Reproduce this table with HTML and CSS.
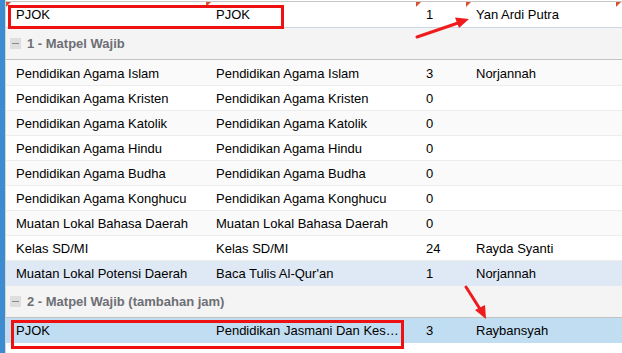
FILE: index.html
```html
<!DOCTYPE html>
<html>
<head>
<meta charset="utf-8">
<link rel="stylesheet" href="styles.css">
</head>
<body>
<div class="page">
  <div class="sidebar"></div>
  <div class="grid">
    <div class="row top">
      <div class="cell dirty">PJOK</div>
      <div class="cell dirty">PJOK</div>
      <div class="cell dirty">1</div>
      <div class="cell dirty">Yan Ardi Putra</div>
      <div class="cell dirty"></div>
    </div>
    <div class="group"><span class="toggle"></span>1 - Matpel Wajib</div>
    <div class="row alt first">
      <div class="cell">Pendidikan Agama Islam</div>
      <div class="cell">Pendidikan Agama Islam</div>
      <div class="cell">3</div>
      <div class="cell">Norjannah</div>
      <div class="cell"></div>
    </div>
    <div class="row">
      <div class="cell">Pendidikan Agama Kristen</div>
      <div class="cell">Pendidikan Agama Kristen</div>
      <div class="cell">0</div>
      <div class="cell"></div>
      <div class="cell"></div>
    </div>
    <div class="row alt">
      <div class="cell">Pendidikan Agama Katolik</div>
      <div class="cell">Pendidikan Agama Katolik</div>
      <div class="cell">0</div>
      <div class="cell"></div>
      <div class="cell"></div>
    </div>
    <div class="row">
      <div class="cell">Pendidikan Agama Hindu</div>
      <div class="cell">Pendidikan Agama Hindu</div>
      <div class="cell">0</div>
      <div class="cell"></div>
      <div class="cell"></div>
    </div>
    <div class="row alt">
      <div class="cell">Pendidikan Agama Budha</div>
      <div class="cell">Pendidikan Agama Budha</div>
      <div class="cell">0</div>
      <div class="cell"></div>
      <div class="cell"></div>
    </div>
    <div class="row">
      <div class="cell">Pendidikan Agama Konghucu</div>
      <div class="cell">Pendidikan Agama Konghucu</div>
      <div class="cell">0</div>
      <div class="cell"></div>
      <div class="cell"></div>
    </div>
    <div class="row alt">
      <div class="cell">Muatan Lokal Bahasa Daerah</div>
      <div class="cell">Muatan Lokal Bahasa Daerah</div>
      <div class="cell">0</div>
      <div class="cell"></div>
      <div class="cell"></div>
    </div>
    <div class="row">
      <div class="cell">Kelas SD/MI</div>
      <div class="cell">Kelas SD/MI</div>
      <div class="cell">24</div>
      <div class="cell">Rayda Syanti</div>
      <div class="cell"></div>
    </div>
    <div class="row over">
      <div class="cell">Muatan Lokal Potensi Daerah</div>
      <div class="cell">Baca Tulis Al-Qur'an</div>
      <div class="cell">1</div>
      <div class="cell">Norjannah</div>
      <div class="cell"></div>
    </div>
    <div class="group"><span class="toggle"></span>2 - Matpel Wajib (tambahan jam)</div>
    <div class="row selected">
      <div class="cell">PJOK</div>
      <div class="cell">Pendidikan Jasmani Dan Kesehatan</div>
      <div class="cell">3</div>
      <div class="cell">Raybansyah</div>
      <div class="cell"></div>
    </div>
  </div>

  <div class="mark mark-1"></div>
  <div class="mark mark-2"></div>
  <svg class="arrows" width="622" height="353" viewBox="0 0 622 353">
    <g stroke="#ee1c1c" stroke-width="3" stroke-linecap="round" fill="#ee1c1c">
      <line x1="417" y1="37" x2="458" y2="23"/>
      <polygon points="469,19 455,17.5 459,28" stroke="none"/>
      <line x1="466" y1="287" x2="480" y2="309"/>
      <polygon points="486,319 475,310 485,305" stroke="none"/>
    </g>
  </svg>
</div>
</body>
</html>
```

FILE: styles.css
```css
html, body {
  margin: 0;
  padding: 0;
  background: #ffffff;
}

.page {
  position: relative;
  width: 622px;
  height: 353px;
  overflow: hidden;
  display: flex;
  font-family: "Liberation Sans", Arial, sans-serif;
  font-size: 13px;
  color: #000;
}

.sidebar {
  width: 5px;
  flex: 0 0 5px;
  background: #3d8cd2;
  border-right: 1px solid #d4d4d4;
}

.grid {
  flex: 1;
  display: flex;
  flex-direction: column;
  padding-top: 1px;
}

.row {
  display: grid;
  grid-template-columns: 200px 210px 50px 150px 1fr;
  height: 24px;
  line-height: 24px;
  border-bottom: 1px solid #ededed;
  background: #ffffff;
}

.row .cell {
  padding-top: 1px;
}

.row.first {
  height: 25px;
  line-height: 25px;
}

.row.alt {
  background: #fafafa;
}

.row.over {
  background: #dfe9f5;
  border-bottom-color: #dfe9f5;
}

.row.selected {
  background: #c1ddf1;
  border-bottom-color: #c1ddf1;
}

.row.top {
  border-top: 1px solid #c6c6c6;
  border-bottom: 1px solid #cbd8e4;
  height: 25px;
  line-height: 25px;
}

.row.top .cell {
  padding-top: 0;
}

.cell {
  position: relative;
  padding: 0 10px;
  white-space: nowrap;
  overflow: hidden;
  text-overflow: ellipsis;
}

.cell.dirty::before {
  content: "";
  position: absolute;
  left: 0;
  top: 0;
  border-top: 5px solid #d9502f;
  border-right: 5px solid transparent;
}

.group {
  height: 31px;
  line-height: 31px;
  background: #f4f4f4;
  border-bottom: 1px solid #c2c2c2;
  font-weight: bold;
  color: #6d6f74;
  display: flex;
  align-items: center;
  padding-left: 4px;
}

.toggle {
  width: 11px;
  height: 11px;
  background: #dedede;
  position: relative;
  margin-right: 6px;
  flex: 0 0 11px;
}

.toggle::after {
  content: "";
  position: absolute;
  left: 2px;
  right: 2px;
  top: 5px;
  height: 1px;
  background: #8a8a8a;
}

.mark {
  position: absolute;
  border: 3px solid #ee1111;
  box-sizing: border-box;
}

.mark-1 {
  left: 8px;
  top: 5px;
  width: 276px;
  height: 24px;
}

.mark-2 {
  left: 11px;
  top: 320px;
  width: 393px;
  height: 29px;
}

.arrows {
  position: absolute;
  left: 0;
  top: 0;
  pointer-events: none;
}
```
